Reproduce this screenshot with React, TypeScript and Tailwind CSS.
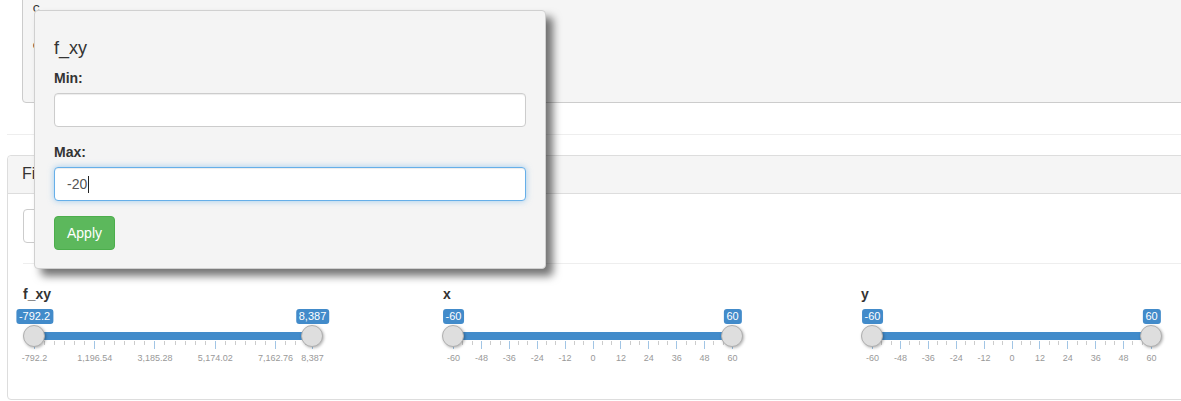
import React from 'react'

// ---------------------------------------------------------------------------
// Range slider (ion.rangeSlider "shiny" skin look-alike)
// ---------------------------------------------------------------------------

interface Tick {
  p: number
  major: boolean
  text?: string
}

interface RangeSliderProps {
  label: string
  from: string
  to: string
  ticks: Tick[]
  start?: number
  len?: number
}

function RangeSlider({ label, from, to, ticks, start = 11, len = 279 }: RangeSliderProps) {
  const left = start
  const right = start + len
  const at = (p: number) => start + p * len

  return (
    <div className="mb-[15px] w-[300px]">
      <label className="mb-[5px] block text-[14px] font-bold leading-[20px] text-[#333]">{label}</label>
      <div className="relative h-[60px]">
        {/* line + bar */}
        <div className="absolute left-0 top-[23px] h-[8px] w-[300px] rounded-[4px] bg-[#ededed]" />
        <div
          className="absolute top-[23px] h-[8px] bg-[#428bca]"
          style={{ left, width: right - left }}
        />

        {/* grid */}
        {ticks.map((t, i) => (
          <div
            key={i}
            className={
              t.major
                ? 'absolute top-[32px] h-[8px] w-px bg-[#a1c5e5]'
                : 'absolute top-[32px] h-[4px] w-px bg-[#cccccc]'
            }
            style={{ left: Math.round(at(t.p)) }}
          />
        ))}
        {ticks
          .filter((t) => t.text)
          .map((t, i) => (
            <span
              key={i}
              className="absolute top-[44px] -translate-x-1/2 whitespace-nowrap text-[9px] leading-[10px] text-[#999]"
              style={{ left: at(t.p) + 0.5 }}
            >
              {t.text}
            </span>
          ))}

        {/* handles */}
        {[left, right].map((c, i) => (
          <div
            key={i}
            className="absolute top-[16px] h-[22px] w-[22px] rounded-full border border-[#b0b0b0] bg-[#dedede] shadow-[1px_1px_3px_rgba(0,0,0,0.3)]"
            style={{ left: c - 11 }}
          />
        ))}

        {/* value badges */}
        {[
          { c: left, v: from },
          { c: right, v: to },
        ].map((b, i) => (
          <span
            key={i}
            className="absolute top-0 -translate-x-1/2 whitespace-nowrap rounded-[3px] bg-[#428bca] px-[3px] py-px text-[11px] leading-[13px] text-white"
            style={{ left: b.c + 0.5 }}
          >
            {b.v}
          </span>
        ))}
      </div>
    </div>
  )
}

// evenly spaced majors with two minor ticks between them
function linearTicks(values: number[]): Tick[] {
  const n = values.length - 1
  const out: Tick[] = []
  values.forEach((v, i) => {
    out.push({ p: i / n, major: true, text: String(v) })
    if (i < n) {
      out.push({ p: (i + 1 / 3) / n, major: false })
      out.push({ p: (i + 2 / 3) / n, major: false })
    }
  })
  return out
}

function fxyTicks(): Tick[] {
  const min = -792.2
  const max = 8387
  const step = 1988.74
  const labels = ['-792.2', '1,196.54', '3,185.28', '5,174.02', '7,162.76']
  const out: Tick[] = []
  labels.forEach((text, i) => {
    const p = (i * step) / (max - min)
    out.push({ p, major: true, text })
    for (let k = 1; k < 6; k++) {
      const q = p + (k * step) / 6 / (max - min)
      if (q < 0.985) out.push({ p: q, major: false })
    }
  })
  out.push({ p: 1, major: true, text: '8,387' })
  return out
}

const sixties = [-60, -48, -36, -24, -12, 0, 12, 24, 36, 48, 60]

// ---------------------------------------------------------------------------
// Popover with min / max form
// ---------------------------------------------------------------------------

function RangePopover() {
  return (
    <div className="absolute left-[34px] top-[10px] w-[512px] rounded-[4px] border border-[#d0d0d0] bg-[#f4f4f4] px-[19px] pb-[18px] pt-[27px] shadow-[7px_7px_9px_rgba(0,0,0,0.55)]">
      <h4 className="mb-[10px] text-[18px] leading-[20px] text-[#333]">f_xy</h4>

      <label className="mb-[5px] block text-[14px] font-bold leading-[20px] text-[#333]">Min:</label>
      <div className="mb-[15px] h-[34px] w-full rounded-[4px] border border-[#ccc] bg-white shadow-[inset_0_1px_1px_rgba(0,0,0,0.075)]" />

      <label className="mb-[5px] block text-[14px] font-bold leading-[20px] text-[#333]">Max:</label>
      <div className="mb-[15px] flex h-[34px] w-full items-center rounded-[4px] border border-[#66afe9] bg-white px-[12px] text-[14px] text-[#555] shadow-[inset_0_1px_1px_rgba(0,0,0,0.075),0_0_6px_rgba(102,175,233,0.6)]">
        <span>-20</span>
        <span className="ml-px h-[17px] w-px bg-[#222]" />
      </div>

      <button className="h-[34px] rounded-[4px] border border-[#4cae4c] bg-[#5cb85c] px-[12px] text-[14px] leading-[20px] text-white">
        Apply
      </button>
    </div>
  )
}

// ---------------------------------------------------------------------------
// Page
// ---------------------------------------------------------------------------

export default function App() {
  return (
    <div className="relative h-[401px] w-[1181px] overflow-hidden bg-white font-['Liberation_Sans',Arial,sans-serif] text-[14px] text-[#333]">
      <div className="w-[1296px] pl-[7px]">
        {/* code output, mostly hidden under the popover */}
        <div className="px-[15px]">
          <pre className="mt-[-11px] rounded-[4px] border border-[#ccc] bg-[#f5f5f5] p-[9.5px] font-['Liberation_Mono',monospace] text-[13px] leading-[18.57px] text-[#333]">
            {'c\n: num -792\nc(-792.2, 8387)\n: num -60\n: num -60'}
          </pre>
        </div>

        <hr className="mb-[20px] mt-[31px] border-0 border-t border-[#eee]" />

        {/* filter panel */}
        <div className="rounded-[4px] border border-[#ddd] bg-white">
          <div className="flex h-[38px] items-center rounded-t-[4px] border-b border-[#ddd] bg-[#f5f5f5] px-[14px]">
            <h3 className="text-[16px] leading-[18px] text-[#333]">Filters</h3>
          </div>
          <div className="p-[15px]">
            <button className="h-[34px] rounded-[4px] border border-[#ccc] bg-white px-[12px] text-[14px] text-[#333]">
              Add filter
            </button>
            <hr className="mb-[20px] mt-[20px] border-0 border-t border-[#eee]" />
            <div className="grid grid-cols-3">
              <div>
                <RangeSlider label="f_xy" from="-792.2" to="8,387" ticks={fxyTicks()} start={11} len={278} />
              </div>
              <div className="pl-px">
                <RangeSlider label="x" from="-60" to="60" ticks={linearTicks(sixties)} start={10} />
              </div>
              <div>
                <RangeSlider label="y" from="-60" to="60" ticks={linearTicks(sixties)} start={11} />
              </div>
            </div>
          </div>
        </div>
      </div>

      <RangePopover />
    </div>
  )
}
